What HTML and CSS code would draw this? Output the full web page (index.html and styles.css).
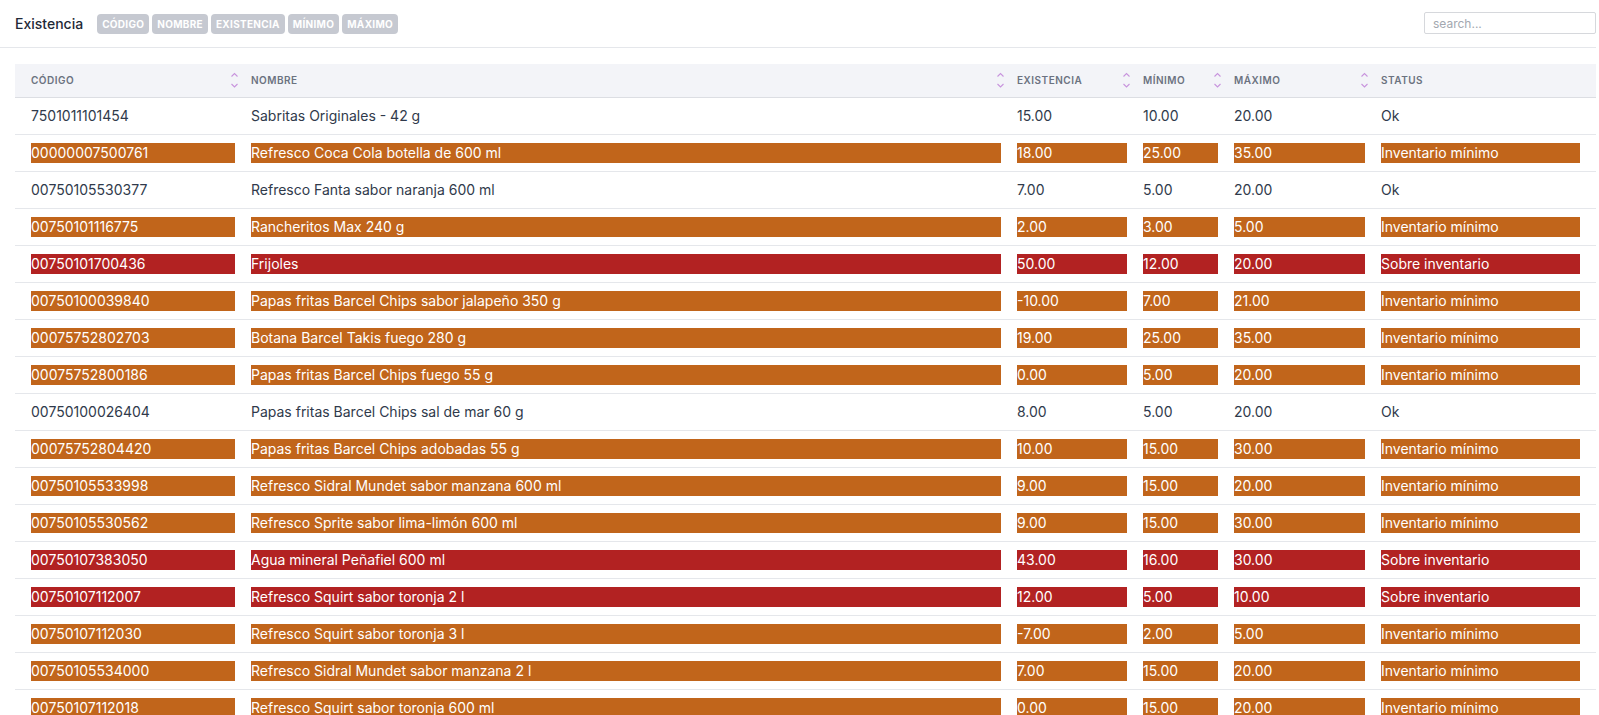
FILE: index.html
```html
<!DOCTYPE html>
<html lang="es">
<head>
<meta charset="utf-8">
<title>Existencia</title>
<link rel="stylesheet" href="styles.css">
</head>
<body>
<div class="page">
  <header class="topbar">
    <div class="title-group">
      <h1 class="title">Existencia</h1>
      <div class="badges">
        <span class="badge">Código</span>
        <span class="badge">Nombre</span>
        <span class="badge">Existencia</span>
        <span class="badge">Mínimo</span>
        <span class="badge">Máximo</span>
      </div>
    </div>
    <input class="search" type="text" placeholder="search...">
  </header>
  <main class="content">
    <table class="grid">
      <colgroup>
        <col class="c-code"><col class="c-name"><col class="c-ex"><col class="c-min"><col class="c-max"><col class="c-status">
      </colgroup>
      <thead>
        <tr>
          <th><div class="th-in"><span>Código</span><svg class="sort" viewBox="0 0 9 18"><path d="M1.5 5.5 4.5 2.5 7.5 5.5M1.5 13 4.5 16 7.5 13"/></svg></div></th>
          <th><div class="th-in"><span>Nombre</span><svg class="sort" viewBox="0 0 9 18"><path d="M1.5 5.5 4.5 2.5 7.5 5.5M1.5 13 4.5 16 7.5 13"/></svg></div></th>
          <th><div class="th-in"><span>Existencia</span><svg class="sort" viewBox="0 0 9 18"><path d="M1.5 5.5 4.5 2.5 7.5 5.5M1.5 13 4.5 16 7.5 13"/></svg></div></th>
          <th><div class="th-in"><span>Mínimo</span><svg class="sort" viewBox="0 0 9 18"><path d="M1.5 5.5 4.5 2.5 7.5 5.5M1.5 13 4.5 16 7.5 13"/></svg></div></th>
          <th><div class="th-in"><span>Máximo</span><svg class="sort" viewBox="0 0 9 18"><path d="M1.5 5.5 4.5 2.5 7.5 5.5M1.5 13 4.5 16 7.5 13"/></svg></div></th>
          <th class="last"><div class="th-in"><span>Status</span></div></th>
        </tr>
      </thead>
      <tbody>
        <tr><td><span class="cell">7501011101454</span></td><td><span class="cell">Sabritas Originales - 42 g</span></td><td><span class="cell">15.00</span></td><td><span class="cell">10.00</span></td><td><span class="cell">20.00</span></td><td class="last"><span class="cell">Ok</span></td></tr>
        <tr class="low"><td><span class="cell">00000007500761</span></td><td><span class="cell">Refresco Coca Cola botella de 600 ml</span></td><td><span class="cell">18.00</span></td><td><span class="cell">25.00</span></td><td><span class="cell">35.00</span></td><td class="last"><span class="cell">Inventario mínimo</span></td></tr>
        <tr><td><span class="cell">00750105530377</span></td><td><span class="cell">Refresco Fanta sabor naranja 600 ml</span></td><td><span class="cell">7.00</span></td><td><span class="cell">5.00</span></td><td><span class="cell">20.00</span></td><td class="last"><span class="cell">Ok</span></td></tr>
        <tr class="low"><td><span class="cell">00750101116775</span></td><td><span class="cell">Rancheritos Max 240 g</span></td><td><span class="cell">2.00</span></td><td><span class="cell">3.00</span></td><td><span class="cell">5.00</span></td><td class="last"><span class="cell">Inventario mínimo</span></td></tr>
        <tr class="over"><td><span class="cell">00750101700436</span></td><td><span class="cell">Frijoles</span></td><td><span class="cell">50.00</span></td><td><span class="cell">12.00</span></td><td><span class="cell">20.00</span></td><td class="last"><span class="cell">Sobre inventario</span></td></tr>
        <tr class="low"><td><span class="cell">00750100039840</span></td><td><span class="cell">Papas fritas Barcel Chips sabor jalapeño 350 g</span></td><td><span class="cell">-10.00</span></td><td><span class="cell">7.00</span></td><td><span class="cell">21.00</span></td><td class="last"><span class="cell">Inventario mínimo</span></td></tr>
        <tr class="low"><td><span class="cell">00075752802703</span></td><td><span class="cell">Botana Barcel Takis fuego 280 g</span></td><td><span class="cell">19.00</span></td><td><span class="cell">25.00</span></td><td><span class="cell">35.00</span></td><td class="last"><span class="cell">Inventario mínimo</span></td></tr>
        <tr class="low"><td><span class="cell">00075752800186</span></td><td><span class="cell">Papas fritas Barcel Chips fuego 55 g</span></td><td><span class="cell">0.00</span></td><td><span class="cell">5.00</span></td><td><span class="cell">20.00</span></td><td class="last"><span class="cell">Inventario mínimo</span></td></tr>
        <tr><td><span class="cell">00750100026404</span></td><td><span class="cell">Papas fritas Barcel Chips sal de mar 60 g</span></td><td><span class="cell">8.00</span></td><td><span class="cell">5.00</span></td><td><span class="cell">20.00</span></td><td class="last"><span class="cell">Ok</span></td></tr>
        <tr class="low"><td><span class="cell">00075752804420</span></td><td><span class="cell">Papas fritas Barcel Chips adobadas 55 g</span></td><td><span class="cell">10.00</span></td><td><span class="cell">15.00</span></td><td><span class="cell">30.00</span></td><td class="last"><span class="cell">Inventario mínimo</span></td></tr>
        <tr class="low"><td><span class="cell">00750105533998</span></td><td><span class="cell">Refresco Sidral Mundet sabor manzana 600 ml</span></td><td><span class="cell">9.00</span></td><td><span class="cell">15.00</span></td><td><span class="cell">20.00</span></td><td class="last"><span class="cell">Inventario mínimo</span></td></tr>
        <tr class="low"><td><span class="cell">00750105530562</span></td><td><span class="cell">Refresco Sprite sabor lima-limón 600 ml</span></td><td><span class="cell">9.00</span></td><td><span class="cell">15.00</span></td><td><span class="cell">30.00</span></td><td class="last"><span class="cell">Inventario mínimo</span></td></tr>
        <tr class="over"><td><span class="cell">00750107383050</span></td><td><span class="cell">Agua mineral Peñafiel 600 ml</span></td><td><span class="cell">43.00</span></td><td><span class="cell">16.00</span></td><td><span class="cell">30.00</span></td><td class="last"><span class="cell">Sobre inventario</span></td></tr>
        <tr class="over"><td><span class="cell">00750107112007</span></td><td><span class="cell">Refresco Squirt sabor toronja 2 l</span></td><td><span class="cell">12.00</span></td><td><span class="cell">5.00</span></td><td><span class="cell">10.00</span></td><td class="last"><span class="cell">Sobre inventario</span></td></tr>
        <tr class="low"><td><span class="cell">00750107112030</span></td><td><span class="cell">Refresco Squirt sabor toronja 3 l</span></td><td><span class="cell">-7.00</span></td><td><span class="cell">2.00</span></td><td><span class="cell">5.00</span></td><td class="last"><span class="cell">Inventario mínimo</span></td></tr>
        <tr class="low"><td><span class="cell">00750105534000</span></td><td><span class="cell">Refresco Sidral Mundet sabor manzana 2 l</span></td><td><span class="cell">7.00</span></td><td><span class="cell">15.00</span></td><td><span class="cell">20.00</span></td><td class="last"><span class="cell">Inventario mínimo</span></td></tr>
        <tr class="low"><td><span class="cell">00750107112018</span></td><td><span class="cell">Refresco Squirt sabor toronja 600 ml</span></td><td><span class="cell">0.00</span></td><td><span class="cell">15.00</span></td><td><span class="cell">20.00</span></td><td class="last"><span class="cell">Inventario mínimo</span></td></tr>
      </tbody>
    </table>
  </main>
</div>
</body>
</html>
```

FILE: styles.css
```css
* { box-sizing: border-box; }
html, body { margin: 0; padding: 0; background: #fff; }
body {
  font-family: Inter, "Noto Sans", "Liberation Sans", sans-serif;
  color: #303a4b;
  overflow: hidden;
}
.page { width: 1596px; }

.topbar {
  height: 48px;
  border-bottom: 1px solid #e5e7eb;
  display: flex;
  align-items: center;
  justify-content: space-between;
  padding-left: 15px;
}
.title-group { display: flex; align-items: center; gap: 14px; }
.title {
  margin: 0;
  font-size: 14px;
  font-weight: 500;
  color: #1f2937;
  line-height: 20px;
}
.badges { display: flex; gap: 3px; }
.badge {
  display: inline-flex;
  align-items: center;
  height: 20px;
  padding: 0 5px;
  border-radius: 4px;
  background: #c6c9d1;
  color: #fff;
  font-size: 10px;
  font-weight: 700;
  text-transform: uppercase;
  letter-spacing: 0.03em;
}
.search {
  width: 172px;
  height: 22px;
  margin-top: -1px;
  border: 1px solid #d6d8dc;
  border-radius: 2px;
  padding: 0 8px;
  font-family: Inter, "Noto Sans", sans-serif;
  font-size: 12px;
  color: #374151;
  outline: none;
}
.search::placeholder { color: #a3a8b0; }

.content { padding: 16px 0 0 15px; }
.grid {
  width: 100%;
  border-collapse: collapse;
  table-layout: fixed;
}
.c-code { width: 220px; }
.c-name { width: 766px; }
.c-ex { width: 126px; }
.c-min { width: 91px; }
.c-max { width: 147px; }
.c-status { width: auto; }

.grid th {
  height: 33px;
  padding: 0 0 0 16px;
  background: #f3f4f8;
  border-bottom: 1px solid #dcdee3;
  text-align: left;
  font-size: 10px;
  font-weight: 600;
  color: #6b7280;
  text-transform: uppercase;
  letter-spacing: 0.05em;
}
.th-in {
  display: flex;
  align-items: center;
  justify-content: space-between;
  height: 32px;
}
.sort {
  width: 9px;
  height: 18px;
  margin-right: -4px;
  fill: none;
  stroke: #c894dd;
  stroke-width: 1.1;
  flex: none;
}
.grid td {
  padding: 8px 0 8px 16px;
  border-bottom: 1px solid #e5e7eb;
  font-size: 14px;
  line-height: 20px;
  color: #303a4b;
  white-space: nowrap;
}
.grid .last { padding-right: 16px; }
.cell { display: block; height: 20px; }
.low .cell { background: #c1651b; color: #fff; }
.over .cell { background: #b22222; color: #fff; }
```
